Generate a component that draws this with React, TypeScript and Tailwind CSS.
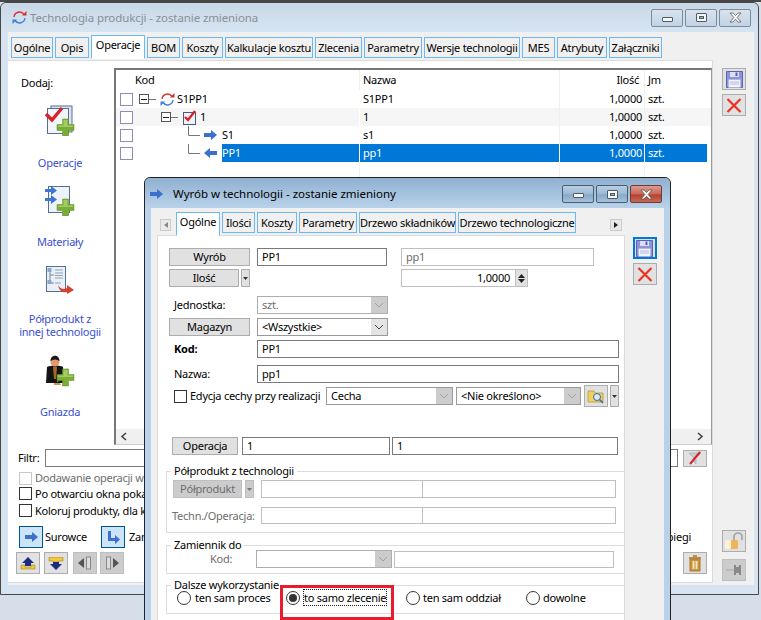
import React from 'react';

const MAIN_TABS = [
  { label: 'Ogólne', w: 'w-[42px]' },
  { label: 'Opis', w: 'w-[34px]' },
  { label: 'Operacje', w: 'w-[54px]', active: true },
  { label: 'BOM', w: 'w-[33px]' },
  { label: 'Koszty', w: 'w-[41px]' },
  { label: 'Kalkulacje kosztu', w: 'w-[88px]' },
  { label: 'Zlecenia', w: 'w-[47px]' },
  { label: 'Parametry', w: 'w-[58px]' },
  { label: 'Wersje technologii', w: 'w-[96px]' },
  { label: 'MES', w: 'w-[33px]' },
  { label: 'Atrybuty', w: 'w-[50px]' },
  { label: 'Załączniki', w: 'w-[53px]' },
];

const DIALOG_TABS = [
  { label: 'Ogólne', w: 'w-[44px]', active: true },
  { label: 'Ilości', w: 'w-[33px]' },
  { label: 'Koszty', w: 'w-[40px]' },
  { label: 'Parametry', w: 'w-[58px]' },
  { label: 'Drzewo składników', w: 'w-[97px]' },
  { label: 'Drzewo technologiczne', w: 'w-[118px]' },
];

const btnCls = 'flex items-center justify-center bg-[#e1e1e1] border border-[#adadad] text-black shrink-0';
const inputCls = 'flex items-center bg-white border border-[#7a7a7a] pl-[4px] shrink-0';
const offCls = 'flex items-center bg-white border border-[#bfbfbf] pl-[4px] text-[#6d6d6d] shrink-0';

function Tab({ label, w, active }: { label: string; w: string; active?: boolean }) {
  if (active) {
    return <div className={`${w} h-[24px] self-end -mb-px z-10 shrink-0 flex items-center justify-center pb-[4px] bg-white border border-[#6db8f2] border-b-white whitespace-nowrap`}>{label}</div>;
  }
  return <div className={`${w} h-[21px] shrink-0 flex items-center justify-center bg-[#f0f0f0] border border-[#6db8f2] whitespace-nowrap`}>{label}</div>;
}

function WinBtn({ kind, hot, dim }: { kind: 'min' | 'max' | 'close'; hot?: boolean; dim?: boolean }) {
  const base = hot
    ? 'bg-[linear-gradient(#dc9a8d,#c9675a_50%,#b5402c_55%,#c66a58)] border-[#6e3a36]'
    : dim
      ? 'bg-[linear-gradient(#d8e3ee,#c2d3e4)] border-[#7c8a99]'
      : 'bg-[linear-gradient(#b9cee2,#9ab9d6_50%,#86a8c8_55%,#a6c1da)] border-[#4c5c70]';
  return (
    <div className={`w-[32px] h-[18px] rounded-[2px] border flex items-center justify-center shrink-0 ${base}`}>
      {kind === 'min' && <div className="w-[11px] h-[5px] mt-[3px] bg-[#f4f6f8] border border-[#4e5a66] rounded-[1px]" />}
      {kind === 'max' && <div className="w-[11px] h-[9px] bg-[#f4f6f8] border border-[#4e5a66] rounded-[1px] flex items-center justify-center"><div className="w-[5px] h-[3px] bg-[#9ab1c8] border border-[#4e5a66]" /></div>}
      {kind === 'close' && (
        <svg width="13" height="11" viewBox="0 0 13 11">
          <path d="M1 1h3l2.5 2.6L9 1h3L8.2 5.5 12 10H9L6.5 7.2 4 10H1l3.8-4.5z" fill="#f6f6f6" stroke="#4e4e4e" strokeWidth="0.7" />
        </svg>
      )}
    </div>
  );
}

function Cycle({ size = 15 }: { size?: number }) {
  return (
    <svg width={size} height={size} viewBox="0 0 15 15" className="shrink-0">
      <path d="M2 7A5.5 5.5 0 0 1 12 4.5" fill="none" stroke="#d8332b" strokeWidth="1.4" />
      <path d="M10 5.5h4.5V1z" fill="#d8332b" />
      <path d="M13 8A5.5 5.5 0 0 1 3 10.5" fill="none" stroke="#3f7fd8" strokeWidth="1.4" />
      <path d="M5 9.5H.5V14z" fill="#3f7fd8" />
    </svg>
  );
}

function CheckBoxIcon() {
  return (
    <svg width="14" height="15" viewBox="0 0 14 15" className="shrink-0">
      <rect x="0.5" y="2.5" width="12" height="12" fill="#eef3fa" stroke="#4a5a78" />
      <path d="M2 7l3 3 7-9" fill="none" stroke="#d9232b" strokeWidth="2.4" />
    </svg>
  );
}

function Arrow({ left }: { left?: boolean }) {
  return (
    <svg width="13" height="10" viewBox="0 0 13 10" className="shrink-0">
      {left
        ? <path d="M0 5l6-5v3h7v4H6v3z" fill="#3b70cf" />
        : <path d="M13 5L7 0v3H0v4h7v3z" fill="#3b70cf" />}
    </svg>
  );
}

function Floppy() {
  return (
    <svg width="17" height="17" viewBox="0 0 17 17">
      <path d="M.5.5h16v16H.5z" fill="#8d94d8" stroke="#5a62b4" />
      <rect x="4" y="1" width="9" height="5" fill="#dcdff5" />
      <rect x="9.5" y="1.5" width="2" height="3.5" fill="#5a62b4" />
      <rect x="2.5" y="8.5" width="12" height="8" fill="#f2f3fb" stroke="#a8addf" strokeWidth="0.6" />
      <path d="M4 11h9M4 13h9" stroke="#b4b8e0" />
    </svg>
  );
}

function RedX() {
  return (
    <svg width="16" height="15" viewBox="0 0 16 15">
      <path d="M1.5 1l13 13M14.5 1l-13 13" stroke="#ec3323" strokeWidth="2.2" />
    </svg>
  );
}

function Plus() {
  return (
    <>
      <path d="M17.500 14h6v5.500H29v6h-5.500V31h-6v-5.500H12v-6h5.500z" fill="#78ae34" stroke="#5f9128" strokeWidth="0.5" />
      <path d="M18.500 15h4v5.500h5.500v1.500H13v-1.500h5.500z" fill="#a3cc62" />
    </>
  );
}

function OperacjeIcon() {
  return (
    <svg width="30" height="31" viewBox="0 0 30 31">
      <rect x="6" y="1" width="21" height="26" fill="#dbe4f0" stroke="#59708f" />
      <rect x="2.5" y="3.5" width="21" height="25" fill="#f2f6fc" stroke="#54708f" />
      <path d="M1 9l6 6L17 3" fill="none" stroke="#d8232a" strokeWidth="3.4" />
      <Plus />
    </svg>
  );
}

function MaterialyIcon() {
  return (
    <svg width="30" height="31" viewBox="0 0 30 31">
      <rect x="3.5" y="1.5" width="21" height="26" fill="#eef3fb" stroke="#54708f" />
      <path d="M0 4h6V1l6 4.5-6 4.5V7H0zM0 13h6v-3l6 4.5L6 19v-3H0z" fill="#3f74d2" />
      <Plus />
    </svg>
  );
}

function PolproduktIcon() {
  return (
    <svg width="30" height="29" viewBox="0 0 30 29">
      <rect x="1.5" y="1.5" width="19" height="25" fill="#eaf0f8" stroke="#54708f" />
      <path d="M5 5v13h4M5 10h4" fill="none" stroke="#7487a0" />
      <path d="M10 5h8M10 8h8M10 10.500h8M10 13h8M10 18h6" stroke="#8fa2ba" />
      <rect x="2.500" y="3" width="4" height="4" fill="#8fa6c8" />
      <rect x="2.500" y="15" width="4" height="4" fill="#8fa6c8" />
      <path d="M13 20c2 4 6 5 9 3v-3l7 5-7 4v-2c-4 1-8-1-9-7z" fill="#d7402e" />
    </svg>
  );
}

function GniazdaIcon() {
  return (
    <svg width="30" height="32" viewBox="0 0 30 32">
      <path d="M2 12c4-2 13-2 16 0l1 16H1z" fill="#141414" />
      <path d="M8 12h4l-1 12h-2z" fill="#a8652a" />
      <circle cx="10" cy="7" r="4.500" fill="#e39a70" />
      <path d="M5.500 6c0-7 9-7 9 0-3-2-6-2-9 0z" fill="#1a1a1a" />
      <path d="M12 27c6-5 7-12 11-13" fill="none" stroke="#5878a8" strokeWidth="1.2" />
      <path d="M9 28h6l1 2H9z" fill="#c89a3c" />
      <Plus />
    </svg>
  );
}

function Launcher({ icon, label, cls }: { icon: React.ReactNode; label: React.ReactNode; cls: string }) {
  return (
    <div className={`flex flex-col items-center ${cls}`}>
      <div className="flex h-[31px] items-center">{icon}</div>
      <div className="text-center text-[#3a4fd2] leading-[13px]">{label}</div>
    </div>
  );
}

function Box({ off }: { off?: boolean }) {
  return <div className={`w-[13px] h-[13px] shrink-0 bg-white border ${off ? 'border-[#c8c8c8]' : 'border-[#333]'}`} />;
}

function Caret({ off }: { off?: boolean }) {
  return (
    <div className={`w-[16px] self-stretch flex items-center justify-center shrink-0 ${off ? 'bg-[#cccccc] text-[#a0a0a0]' : 'bg-[#e4e4e4] text-[#444]'}`}>
      <svg width="10" height="6" viewBox="0 0 10 6"><path d="M1 1l4 4 4-4" fill="none" stroke="currentColor" /></svg>
    </div>
  );
}

function Combo({ w, text, off, arrowOff }: { w: string; text?: string; off?: boolean; arrowOff?: boolean }) {
  return (
    <div className={`${w} h-[18px] flex items-stretch shrink-0 bg-white border ${off ? 'border-[#aeaeae] text-[#6d6d6d]' : 'border-[#9a9a9a]'}`}>
      <div className="flex-1 flex items-center pl-[4px] min-w-0 whitespace-nowrap">{text}</div>
      <Caret off={off || arrowOff} />
    </div>
  );
}

function Radio({ on }: { on?: boolean }) {
  return (
    <div className="w-[14px] h-[14px] rounded-full border border-[#333] bg-white flex items-center justify-center shrink-0">
      {on && <div className="w-[8px] h-[8px] rounded-full bg-[#333]" />}
    </div>
  );
}

function MiniDrop({ h = 'h-[18px]', off }: { h?: string; off?: boolean }) {
  return (
    <div className={`w-[9px] ${h} flex items-center justify-center shrink-0 border ${off ? 'bg-[#cccccc] border-[#bfbfbf]' : 'bg-[#e1e1e1] border-[#adadad]'}`}>
      <svg width="5" height="3" viewBox="0 0 5 3"><path d="M0 0h5L2.500 3z" fill={off ? '#777' : '#333'} /></svg>
    </div>
  );
}

function TreeRow({ alt, selected, gutter, code, name }: { alt?: boolean; selected?: boolean; gutter: React.ReactNode; code: string; name: string }) {
  const cell = selected ? 'bg-[#0078d7] text-white' : '';
  return (
    <div className={`h-[18px] flex shrink-0 ${alt ? 'bg-[#f6f6f6]' : ''}`}>
      <div className="w-[244px] flex items-center pl-[4px] border-r border-white">
        <div className="w-[13px] h-[13px] bg-white border border-[#8f8ab8] shrink-0 mr-[4px]" />
        {gutter}
        <div className={`flex-1 h-full flex items-center ${cell}`}>{code}</div>
      </div>
      <div className={`w-[200px] flex items-center pl-[3px] border-r ${selected ? 'border-white' : 'border-[#f0f0f0]'} ${cell}`}>{name}</div>
      <div className={`w-[85px] flex items-center justify-end pr-[2px] border-r ${selected ? 'border-white' : 'border-[#f0f0f0]'} ${cell}`}>1,0000</div>
      <div className={`w-[62px] flex items-center pl-[3px] ${cell}`}>szt.</div>
    </div>
  );
}

function Expander({ lineW }: { lineW: string }) {
  return (
    <div className="flex items-center shrink-0">
      <div className="w-[10px] h-[10px] border border-[#555] flex items-center justify-center bg-white">
        <div className="w-[6px] h-px bg-[#222]" />
      </div>
      <div className={`${lineW} h-px bg-[#777]`} />
    </div>
  );
}

function ToolBtn({ children, off }: { children?: React.ReactNode; off?: boolean }) {
  return <div className={`w-[24px] h-[22px] flex items-center justify-center shrink-0 border ${off ? 'bg-[#cccccc] border-[#bfbfbf]' : 'bg-[#e1e1e1] border-[#adadad]'}`}>{children}</div>;
}

function Group({ title, cls, children }: { title: string; cls: string; children: React.ReactNode }) {
  return (
    <fieldset className={`ml-[-3px] border border-r-0 border-[#dcdcdc] ${cls}`}>
      <legend className="ml-[4px] px-[3px] leading-[16px]">{title}</legend>
      {children}
    </fieldset>
  );
}

export default function App() {
  return (
    <div className="relative w-[761px] h-[620px] overflow-hidden bg-[#d6dfe9] text-[11px] leading-[16px] text-black font-['Noto_Sans',sans-serif] tracking-[-0.25px]">
      <div className="h-[2px] bg-[#474747]" />

      {/* okno glowne */}
      <div className="absolute left-0 top-[2px] w-[759px] h-[593px] flex flex-col border border-[#474747] rounded-t-[6px] bg-[#d6e4f2]">
        <div className="h-[29px] flex items-center pl-[11px] pr-[7px] rounded-t-[6px] bg-[linear-gradient(#c9d8e7,#d6e4f2)] shrink-0">
          <Cycle />
          <div className="ml-[3px] text-[11.5px] tracking-[-0.1px] text-[#8a8f96]">Technologia produkcji - zostanie zmieniona</div>
          <div className="ml-auto flex gap-[2px]">
            <WinBtn kind="min" dim />
            <WinBtn kind="max" dim />
            <WinBtn kind="close" dim />
          </div>
        </div>

        <div className="flex-1 min-h-0 ml-[7px] mr-[4px] mb-[9px] flex flex-col bg-[#f0f0f0]">
          <div className="h-[28px] flex items-end gap-[2px] pl-[3px] pb-[2px] shrink-0">
            {MAIN_TABS.map(t => <Tab key={t.label} {...t} />)}
          </div>

          <div className="flex-1 min-h-0 flex">
            <div className="w-[705px] flex flex-col bg-white border-t border-r border-b border-[#dcdcdc] mb-[2px]">
              <div className="h-[386px] flex shrink-0">
                {/* lewy pasek */}
                <div className="w-[104px] flex flex-col items-center shrink-0">
                  <div className="w-full pl-[13px] pt-[14px] leading-[16px]">Dodaj:</div>
                  <Launcher cls="mt-[14px]" icon={<OperacjeIcon />} label={<div className="mt-[20px]">Operacje</div>} />
                  <Launcher cls="mt-[16px]" icon={<MaterialyIcon />} label={<div className="mt-[19px]">Materiały</div>} />
                  <Launcher cls="mt-[16px]" icon={<PolproduktIcon />} label={<div className="mt-[17px]">Półprodukt z<br />innej technologii</div>} />
                  <Launcher cls="mt-[17px]" icon={<GniazdaIcon />} label={<div className="mt-[19px]">Gniazda</div>} />
                </div>

                {/* drzewo */}
                <div className="w-[598px] mt-[7px] h-[377px] flex flex-col border-l-[2px] border-l-[#777] border-t-[2px] border-t-[#777] border-r border-r-[#999] border-b border-b-[#ccc] ml-[2px] relative">
                  <div className="h-[20px] flex shrink-0">
                    <div className="w-[244px] pl-[19px] flex items-center border-r border-[#f0f0f0]">Kod</div>
                    <div className="w-[200px] pl-[3px] flex items-center border-r border-[#f0f0f0]">Nazwa</div>
                    <div className="w-[85px] pr-[5px] flex items-center justify-end border-r border-[#f0f0f0]">Ilość</div>
                    <div className="w-[62px] pl-[3px] flex items-center">Jm</div>
                  </div>
                  <TreeRow code="S1PP1" name="S1PP1" gutter={<div className="flex items-center ml-[2px] mr-[2px]"><Expander lineW="w-[7px]" /><div className="ml-[4px]"><Cycle /></div></div>} />
                  <TreeRow alt code="1" name="1" gutter={<div className="flex items-center ml-[24px] mr-[3px]"><Expander lineW="w-[7px]" /><div className="ml-[5px]"><CheckBoxIcon /></div></div>} />
                  <TreeRow code="S1" name="s1" gutter={
                    <div className="ml-[50px] mr-[5px] flex items-center shrink-0 h-[18px] relative">
                      <svg width="17" height="18" viewBox="0 0 17 18"><path d="M1.500 0v9.500H13" fill="none" stroke="#777" /></svg>
                      <Arrow />
                    </div>
                  } />
                  <TreeRow selected code="PP1" name="pp1" gutter={
                    <div className="ml-[50px] mr-[5px] flex items-center shrink-0 h-[18px]">
                      <svg width="17" height="18" viewBox="0 0 17 18"><path d="M1.500 0v9.500H13" fill="none" stroke="#777" /></svg>
                      <Arrow left />
                    </div>
                  } />
                  <div className="flex-1 flex">
                    <div className="w-[244px] border-r border-[#f0f0f0]" />
                    <div className="w-[200px] border-r border-[#f0f0f0]" />
                    <div className="w-[85px] border-r border-[#f0f0f0]" />
                  </div>
                  <div className="h-[15px] flex items-center justify-between bg-[#f0f0f0] shrink-0 px-[4px]">
                    <svg width="8" height="9" viewBox="0 0 8 9"><path d="M6 1L2 4.500 6 8" fill="none" stroke="#444" strokeWidth="1.600" /></svg>
                    <svg width="8" height="9" viewBox="0 0 8 9" className="mr-[3px]"><path d="M2 1l4 3.500L2 8" fill="none" stroke="#444" strokeWidth="1.600" /></svg>
                  </div>
                </div>
              </div>

              {/* dol panelu */}
              <div className="flex items-center h-[20px] mt-[1px] pl-[10px] pr-[5px]">
                <div className="w-[27px]">Filtr:</div>
                <div className="flex-1 h-[18px] border border-[#7a7a7a] bg-white" />
                <div className="ml-[5px] w-[24px] h-[17px] flex items-center justify-center bg-[#e1e1e1] border border-[#adadad]">
                  <svg width="14" height="14" viewBox="0 0 14 14">
                    <path d="M1 2h12L8 7v6L6 11V7z" fill="#c8ced6" stroke="#9aa2ac" strokeWidth="0.6" />
                    <path d="M2 13L12 1" stroke="#d9232b" strokeWidth="2" />
                  </svg>
                </div>
              </div>
              <div className="pl-[11px] mt-[3px] flex items-center gap-[3px] text-[#6d6d6d] h-[14px] whitespace-nowrap"><Box off />Dodawanie operacji w trybie</div>
              <div className="pl-[11px] mt-[1px] flex items-center gap-[3px] h-[15px] whitespace-nowrap"><Box />Po otwarciu okna pokaż listę</div>
              <div className="pl-[11px] mt-[2px] flex items-center gap-[3px] h-[15px] whitespace-nowrap"><Box />Koloruj produkty, dla których</div>

              <div className="flex items-center mt-[8px] pl-[11px] h-[22px] relative">
                <div className="w-[24px] h-[22px] bg-[#cce4f7] border border-[#005499] flex items-center justify-center"><Arrow /></div>
                <div className="ml-[2px] w-[56px]">Surowce</div>
                <div className="w-[24px] h-[22px] bg-[#cce4f7] border border-[#005499] flex items-center justify-center">
                  <svg width="14" height="14" viewBox="0 0 14 14"><path d="M2 1h3v7h4V5l5 4.500L9 14v-3H2z" fill="#3b70cf" /></svg>
                </div>
                <div className="ml-[4px]">Zamienniki</div>
                <div className="ml-auto mr-[21px]">Przebiegi</div>
              </div>

              <div className="flex items-center mt-[4px] pl-[8px] pr-[5px] h-[22px]">
                <div className="flex">
                  <ToolBtn><svg width="16" height="13" viewBox="0 0 16 13"><path d="M8 0l6 6h-3v3H5V6H2z" fill="#1c2a80" /><path d="M1 8h4v2h6V8h4v4H1z" fill="#f0c83a" stroke="#8a7420" strokeWidth="0.5" /></svg></ToolBtn>
                  <div className="ml-[4px]"><ToolBtn><svg width="16" height="13" viewBox="0 0 16 13"><path d="M1 0h14v4h-4v1H5V4H1z" fill="#f0c83a" stroke="#8a7420" strokeWidth="0.5" /><path d="M8 13l6-6h-3V5H5v2H2z" fill="#1c2a80" /></svg></ToolBtn></div>
                  <div className="ml-[5px]"><ToolBtn off><svg width="14" height="14" viewBox="0 0 14 14"><path d="M0 7l6-5v10z" fill="#555" /><rect x="8.500" y="1" width="4" height="12" fill="#ddd" stroke="#888" /></svg></ToolBtn></div>
                  <div className="ml-[3px]"><ToolBtn off><svg width="14" height="14" viewBox="0 0 14 14"><rect x="1.500" y="1" width="4" height="12" fill="#ddd" stroke="#888" /><path d="M14 7L8 2v10z" fill="#555" /></svg></ToolBtn></div>
                </div>
                <div className="ml-auto">
                  <ToolBtn>
                    <svg width="14" height="17" viewBox="0 0 14 17">
                      <path d="M5 1h4M1 3h12" stroke="#a8762a" strokeWidth="1.600" />
                      <path d="M2 4h10v12H2z" fill="#c8963e" stroke="#a8762a" />
                      <rect x="4.500" y="6" width="2" height="8" fill="#efe0c0" />
                      <rect x="7.500" y="6" width="2" height="8" fill="#efe0c0" />
                    </svg>
                  </ToolBtn>
                </div>
              </div>
            </div>

            {/* prawa kolumna */}
            <div className="flex-1 flex flex-col items-center pt-[8px] pl-[1px]">
              <ToolBtn><Floppy /></ToolBtn>
              <div className="mt-[4px]"><ToolBtn><RedX /></ToolBtn></div>
              <div className="mt-[414px]">
                <ToolBtn>
                  <svg width="20" height="18" viewBox="0 0 20 18">
                    <path d="M10 9V5a4 4 0 0 1 8 0v3" fill="none" stroke="#a0a0a0" strokeWidth="1.600" />
                    <rect x="1" y="8" width="13" height="9" rx="1" fill="#f0b45a" />
                    <rect x="1" y="8" width="6" height="9" rx="1" fill="#fbf0d8" />
                  </svg>
                </ToolBtn>
              </div>
              <div className="mt-[7px]">
                <ToolBtn off>
                  <svg width="16" height="12" viewBox="0 0 16 12"><path d="M0 6h9" stroke="#a8a8a8" /><path d="M8 1h2v2h3V1h2v10h-2V9h-3v2H8z" fill="#888" /></svg>
                </ToolBtn>
              </div>
            </div>
          </div>
        </div>
      </div>

      {/* okno dialogu */}
      <div className="absolute left-[144px] top-[177px] w-[527px] h-[470px] flex flex-col border border-[#222] rounded-t-[6px] bg-[#b9d2ea]">
        <div className="h-[30px] flex items-center pl-[5px] pr-[8px] pt-[2px] rounded-t-[6px] bg-[linear-gradient(#90b0d0,#b9d2ea)] shrink-0">
          <Arrow />
          <div className="ml-[10px] text-[11.5px] tracking-[-0.02px]">Wyrób w technologii - zostanie zmieniony</div>
          <div className="ml-auto flex gap-[2px]">
            <WinBtn kind="min" />
            <WinBtn kind="max" />
            <WinBtn kind="close" hot />
          </div>
        </div>

        <div className="flex-1 min-h-0 ml-[6px] mr-[6px] flex flex-col bg-[#f0f0f0]">
          <div className="h-[27px] flex items-end shrink-0 pl-[9px] relative">
            <div className="w-[11px] h-[12px] mb-[4px] mr-[5px] bg-[#e9e9e9] border border-[#ccc] flex items-center justify-center shrink-0">
              <svg width="4" height="6" viewBox="0 0 4 6"><path d="M4 0v6L0 3z" fill="#888" /></svg>
            </div>
            <div className="flex gap-[2px]">
              {DIALOG_TABS.map(t => <Tab key={t.label} {...t} />)}
            </div>
            <div className="ml-[34px] w-[12px] h-[12px] mb-[4px] bg-[#e9e9e9] border border-[#ccc] flex items-center justify-center shrink-0">
              <svg width="4" height="6" viewBox="0 0 4 6"><path d="M0 0v6l4-3z" fill="#222" /></svg>
            </div>
          </div>

          <div className="flex-1 min-h-0 flex">
            <div className="ml-[6px] w-[468px] bg-white border border-[#dcdcdc] pl-[11px] pt-[12px]">
              <div className="flex h-[18px]">
                <div className={`${btnCls} w-[81px]`}>Wyrób</div>
                <div className={`${inputCls} w-[130px] ml-[7px]`}>PP1</div>
                <div className={`${offCls} w-[193px] ml-[14px]`}>pp1</div>
              </div>
              <div className="flex h-[18px] mt-[3px]">
                <div className={`${btnCls} w-[70px]`}>Ilość</div>
                <div className="ml-[2px]"><MiniDrop /></div>
                <div className="ml-[151px] w-[127px] h-[18px] flex items-center bg-white border border-[#bfbfbf] shrink-0">
                  <div className="flex-1 text-right pr-[5px]">1,0000</div>
                  <div className="w-[12px] h-full flex flex-col items-center justify-center gap-[1px] bg-[#e1e1e1] border-l border-[#bfbfbf]">
                    <svg width="7" height="4" viewBox="0 0 7 4"><path d="M3.500 0L7 4H0z" fill="#222" /></svg>
                    <svg width="7" height="4" viewBox="0 0 7 4"><path d="M3.500 4L7 0H0z" fill="#222" /></svg>
                  </div>
                </div>
              </div>
              <div className="flex items-center h-[18px] mt-[9px]">
                <div className="w-[88px] pl-[5px]">Jednostka:</div>
                <Combo w="w-[131px]" text="szt." off />
              </div>
              <div className="flex items-center h-[18px] mt-[4px]">
                <div className={`${btnCls} w-[81px] h-[18px]`}>Magazyn</div>
                <div className="ml-[7px]"><Combo w="w-[131px]" text=" <Wszystkie>" /></div>
              </div>
              <div className="flex items-center h-[18px] mt-[4px]">
                <div className="w-[88px] pl-[5px] font-bold">Kod:</div>
                <div className={`${inputCls} w-[362px] h-[18px]`}>PP1</div>
              </div>
              <div className="flex items-center h-[18px] mt-[7px]">
                <div className="w-[88px] pl-[5px]">Nazwa:</div>
                <div className={`${inputCls} w-[362px] h-[18px]`}>pp1</div>
              </div>
              <div className="flex items-center h-[22px] mt-[2px] pl-[5px]">
                <Box />
                <div className="ml-[3px] w-[136px] whitespace-nowrap">Edycja cechy przy realizacji</div>
                <Combo w="w-[127px]" text="Cecha" arrowOff />
                <div className="ml-[3px]"><Combo w="w-[125px]" text="<Nie określono>" arrowOff /></div>
                <div className="ml-[3px]">
                  <ToolBtn>
                    <svg width="18" height="16" viewBox="0 0 18 16">
                      <path d="M1 3h6l1 2h8v9H1z" fill="#f0d060" stroke="#a08420" strokeWidth="0.6" />
                      <circle cx="10" cy="9" r="3.500" fill="#d8e8f8" stroke="#3a6a9a" />
                      <path d="M12.500 11.500L16 15" stroke="#3a6a9a" strokeWidth="1.600" />
                    </svg>
                  </ToolBtn>
                </div>
                <div className="ml-[2px]"><MiniDrop h="h-[22px]" /></div>
              </div>
              <div className="flex items-center h-[18px] mt-[30px] pl-[3px]">
                <div className={`${btnCls} w-[66px] h-[18px]`}>Operacja</div>
                <div className={`${inputCls} w-[148px] h-[18px] ml-[4px]`}>1</div>
                <div className={`${inputCls} w-[226px] h-[18px] ml-[2px]`}>1</div>
              </div>

              <Group title="Półprodukt z technologii" cls="mt-[8px] h-[70px] text-[#000]">
                <div className="flex items-center h-[18px] pl-[6px] mt-[1px]">
                  <div className="w-[69px] h-[18px] flex items-center justify-center bg-[#cccccc] border border-[#bfbfbf] text-[#6d6d6d] shrink-0">Półprodukt</div>
                  <div className="ml-[3px]"><MiniDrop off /></div>
                  <div className="ml-[7px] w-[162px] h-[18px] border border-[#bfbfbf] shrink-0" />
                  <div className="w-[193px] h-[18px] border border-l-0 border-[#bfbfbf] shrink-0" />
                </div>
                <div className="flex items-center h-[17px] pl-[5px] mt-[9px] text-[#6d6d6d]">
                  <div className="w-[89px] whitespace-nowrap">Techn./Operacja:</div>
                  <div className="w-[162px] h-[17px] border border-[#bfbfbf] shrink-0" />
                  <div className="w-[193px] h-[17px] border border-l-0 border-[#bfbfbf] shrink-0" />
                </div>
              </Group>

              <Group title="Zamiennik do" cls="mt-[4px] h-[37px]">
                <div className="flex items-center h-[18px] -mt-[3px] text-[#6d6d6d]">
                  <div className="w-[46px] ml-[43px] shrink-0">Kod:</div>
                  <Combo w="w-[136px]" off />
                  <div className="ml-[2px] w-[220px] h-[17px] border border-[#bfbfbf] shrink-0" />
                </div>
              </Group>

              <Group title="Dalsze wykorzystanie" cls="mt-[3px] h-[37px]">
                <div className="flex items-center h-[16px] -mt-[3px] pl-[10px]">
                  <Radio />
                  <div className="ml-[4px] w-[91px] whitespace-nowrap">ten sam proces</div>
                  <Radio on />
                  <div className="ml-[3px] w-[103px] whitespace-nowrap"><span className="border border-dotted border-[#222]">to samo zlecenie</span></div>
                  <Radio />
                  <div className="ml-[3px] w-[103px] whitespace-nowrap">ten sam oddział</div>
                  <Radio />
                  <div className="ml-[3px] whitespace-nowrap">dowolne</div>
                </div>
              </Group>
            </div>

            <div className="flex-1 flex flex-col items-center pt-[2px]">
              <div className="w-[24px] h-[22px] flex items-center justify-center bg-[#e1e1e1] border-[2px] border-[#0078d7]"><Floppy /></div>
              <div className="mt-[4px]"><ToolBtn><RedX /></ToolBtn></div>
            </div>
          </div>
        </div>
      </div>

      {/* czerwona ramka */}
      <div className="absolute left-[280px] top-[585px] w-[114px] h-[35px] border-[3px] border-[#e81c2c]" />
    </div>
  );
}
